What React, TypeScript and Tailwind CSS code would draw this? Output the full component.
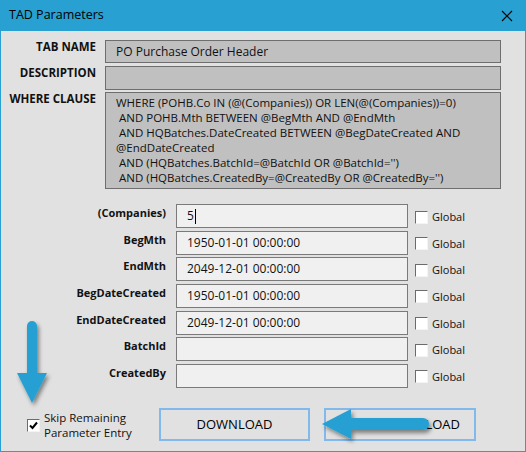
import React from 'react';

const BLUE = '#28a0d2';

function Check({ checked = false }: { checked?: boolean }) {
  return (
    <div className="w-[13px] h-[13px] shrink-0 bg-white border-t border-l border-[#6b6b6b] border-b border-r border-b-[#f4f4f4] border-r-[#f4f4f4] flex items-center justify-center">
      {checked && (
        <svg width="9" height="9" viewBox="0 0 9 9">
          <path d="M1 4.5 L3.5 7 L8 1.5" fill="none" stroke="#000" strokeWidth="2" />
        </svg>
      )}
    </div>
  );
}

const params = [
  { label: '(Companies)', value: '5', caret: true },
  { label: 'BegMth', value: '1950-01-01 00:00:00' },
  { label: 'EndMth', value: '2049-12-01 00:00:00' },
  { label: 'BegDateCreated', value: '1950-01-01 00:00:00' },
  { label: 'EndDateCreated', value: '2049-12-01 00:00:00' },
  { label: 'BatchId', value: '' },
  { label: 'CreatedBy', value: '' },
];

const where = [
  'WHERE (POHB.Co IN (@(Companies)) OR LEN(@(Companies))=0)',
  ' AND POHB.Mth BETWEEN @BegMth AND @EndMth',
  ' AND HQBatches.DateCreated BETWEEN @BegDateCreated AND',
  '@EndDateCreated',
  " AND (HQBatches.BatchId=@BatchId OR @BatchId='')",
  " AND (HQBatches.CreatedBy=@CreatedBy OR @CreatedBy='')",
];

export default function App() {
  return (
    <div className="relative w-[526px] h-[452px] bg-[#e1e1e1] border-x border-b border-[#28a0d2] flex flex-col font-['Open_Sans','Noto_Sans',sans-serif] text-[#111] overflow-hidden">
      {/* title bar */}
      <div className="h-[31px] shrink-0 bg-[#28a0d2] flex items-center justify-between pl-[8px] pr-[12px]">
        <span className="text-[12.5px] text-black">TAD Parameters</span>
        <svg width="12" height="12" viewBox="0 0 12 12">
          <path d="M1 1 L11 11 M11 1 L1 11" stroke="#000" strokeWidth="1.1" />
        </svg>
      </div>

      {/* header fields */}
      <div className="mt-[9px] flex flex-col">
        <div className="flex gap-[9px]">
          <div className="w-[95px] text-right text-[11.5px] font-bold leading-[14px]">TAB NAME</div>
          <div className="w-[396px] h-[23px] bg-[#c0c0c0] border border-[#6e6e6e] pl-[10px] text-[12px] leading-[21px]">
            PO Purchase Order Header
          </div>
        </div>
        <div className="mt-[3px] flex gap-[9px]">
          <div className="w-[95px] text-right text-[11.5px] font-bold leading-[14px]">DESCRIPTION</div>
          <div className="w-[396px] h-[24px] bg-[#c0c0c0] border border-[#6e6e6e]"></div>
        </div>
        <div className="mt-[2px] flex gap-[9px]">
          <div className="w-[95px] text-right text-[11.5px] font-bold leading-[14px] whitespace-nowrap">WHERE CLAUSE</div>
          <div className="w-[396px] h-[97px] bg-[#c0c0c0] border border-[#6e6e6e] pl-[10px] pt-[2px] text-[11.5px] leading-[15px] whitespace-pre">
            {where.map((l, i) => (
              <div key={i}>{l}</div>
            ))}
          </div>
        </div>
      </div>

      {/* parameters */}
      <div className="mt-[15px] flex flex-col gap-[2.67px]">
        {params.map((p) => (
          <div key={p.label} className="flex items-start h-[24px]">
            <div className="w-[165px] text-right text-[11px] font-bold leading-[14px] pt-[2px]">{p.label}</div>
            <div className="ml-[10px] w-[232px] h-[24px] bg-[#f0f0f0] border border-[#7a7a7a] pl-[10px] text-[12px] leading-[22px] flex items-center">
              {p.value}
              {p.caret && <span className="inline-block w-px h-[15px] bg-black ml-[1px]" />}
            </div>
            <div className="ml-[7px] h-[24px] flex items-center gap-[4px] pt-[2px]">
              <Check />
              <span className="text-[11px] leading-[14px]">Global</span>
            </div>
          </div>
        ))}
      </div>

      {/* bottom row */}
      <div className="mt-[20px] flex items-center">
        <div className="ml-[26px] w-[132px] flex items-center gap-[4px] pt-[2px]">
          <Check checked />
          <div className="text-[11.5px] leading-[15px]">
            <div>Skip Remaining</div>
            <div>Parameter Entry</div>
          </div>
        </div>
        <button className="w-[151px] h-[33px] border-2 border-[#82b9ec] text-[13px] text-black flex items-center justify-center">
          DOWNLOAD
        </button>
        <button className="ml-[14px] w-[152px] h-[33px] border-2 border-[#82b9ec] text-[13px] text-black flex items-center justify-end pr-[14px]">
          UPLOAD
        </button>
      </div>

      {/* callout arrows */}
      <svg className="absolute left-0 top-[312px]" width="60" height="100" viewBox="0 312 60 100">
        <defs>
          <filter id="sh" x="-50%" y="-50%" width="200%" height="200%">
            <feDropShadow dx="2" dy="3" stdDeviation="2" floodColor="#000" floodOpacity="0.45" />
          </filter>
        </defs>
        <g filter="url(#sh)" fill={BLUE}>
          <path d="M26 326 a5 5 0 0 1 10 0 V374 H26 Z" />
          <path d="M16 373 H46 L31 403 Z" />
        </g>
      </svg>
      <svg className="absolute left-[310px] top-[400px]" width="135" height="50" viewBox="310 400 135 50">
        <defs>
          <filter id="sh2" x="-50%" y="-50%" width="200%" height="200%">
            <feDropShadow dx="2" dy="3" stdDeviation="2" floodColor="#000" floodOpacity="0.45" />
          </filter>
        </defs>
        <g filter="url(#sh2)" fill={BLUE}>
          <path d="M348 418 H422 a6 6 0 0 1 0 12 H348 Z" />
          <path d="M321 424 L350 409 V439 Z" />
        </g>
      </svg>
    </div>
  );
}
